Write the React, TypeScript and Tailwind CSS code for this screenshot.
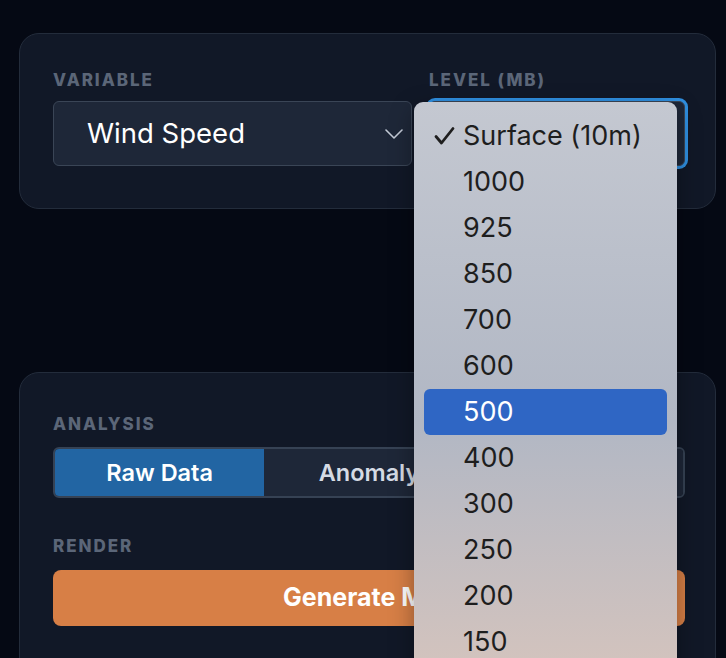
import React from 'react';

const LEVELS = ['Surface (10m)', '1000', '925', '850', '700', '600', '500', '400', '300', '250', '200', '150', '100'];

const FieldLabel: React.FC<{ children: React.ReactNode }> = ({ children }) => (
  <div className="text-[17px] leading-5 font-extrabold tracking-[0.115em] uppercase text-[#5b6678]">{children}</div>
);

const Chevron = () => (
  <svg width="18" height="10" viewBox="0 0 18 10" fill="none" stroke="#c3cad6" strokeWidth="1.6" strokeLinecap="round" strokeLinejoin="round">
    <polyline points="1,1 9,9 17,1" />
  </svg>
);

const Check = () => (
  <svg width="21" height="20" viewBox="0 0 21 20" fill="none" stroke="#1e1e1e" strokeWidth="2.8" strokeLinecap="round" strokeLinejoin="round">
    <polyline points="2,10.5 7.5,17 19,2.5" />
  </svg>
);

// Native-looking popup list shown while the level select is open
const LevelMenu: React.FC<{ selected: string; hovered: string }> = ({ selected, hovered }) => (
  <div className="absolute left-[414px] top-[102px] w-[263px] h-[580px] rounded-[9px] pt-[11px] px-[10px] bg-gradient-to-b from-[#c4c8d1] via-[#b1b7c4] via-55% to-[#d5c4bd] shadow-[0_8px_24px_rgba(0,0,0,0.35)]">
    {LEVELS.map(level => {
      const active = level === hovered;
      return (
        <div
          key={level}
          className={`relative h-[46px] flex items-center pl-[39px] rounded-[6px] text-[27px] ${
            active ? 'bg-[#2f66c4] text-white' : 'text-[#1e1e1e]'
          }`}
        >
          {level === selected && (
            <span className="absolute left-[10px] top-[13px]">
              <Check />
            </span>
          )}
          {level}
        </div>
      );
    })}
  </div>
);

const App: React.FC = () => {
  return (
    <div className="relative w-[726px] h-[658px] overflow-hidden bg-[#050914] font-['Inter',sans-serif]">
      <div className="pl-[19px] pr-[10px] pt-[33px]">
        {/* Data selection */}
        <div className="h-[176px] rounded-[20px] border border-[#232c3b] bg-[#111827] pl-[33px] pr-[30px] pt-[36px]">
          <div className="grid grid-cols-[359px_256px] gap-x-[17px]">
            <div>
              <FieldLabel>Variable</FieldLabel>
              <div className="mt-[11px] h-[65px] rounded-[6px] border border-[#3a4556] bg-[#1e2738] flex items-center justify-between pl-[33px] pr-[8px]">
                <span className="text-[27.5px] text-white">Wind Speed</span>
                <Chevron />
              </div>
            </div>
            <div>
              <FieldLabel>Level (mb)</FieldLabel>
              <div className="mt-[11px] h-[65px] rounded-[6px] border border-[#3a4556] bg-[#1e2738] ring-[3px] ring-[#2f8fe0]" />
            </div>
          </div>
        </div>

        {/* Analysis + render */}
        <div className="mt-[163px] h-[320px] rounded-[20px] border border-[#232c3b] bg-[#111827] pl-[33px] pr-[30px] pt-[41px]">
          <FieldLabel>Analysis</FieldLabel>
          <div className="mt-[13px] h-[51px] grid grid-cols-3 rounded-[6px] border-2 border-[#364254] overflow-hidden">
            <div className="bg-[#2265a3] flex items-center justify-center text-[23.5px] font-semibold text-white">Raw Data</div>
            <div className="bg-[#1e2738] flex items-center justify-center text-[23.5px] font-semibold text-[#d5dbe4]">Anomaly</div>
            <div className="bg-[#1e2738] border-l border-[#364254] flex items-center justify-center text-[23.5px] font-semibold text-[#d5dbe4]">Climatology</div>
          </div>

          <div className="mt-[38px]">
            <FieldLabel>Render</FieldLabel>
          </div>
          <button className="mt-[14px] w-full h-[56px] rounded-[8px] bg-[#d77f46] text-[25px] font-bold text-white">
            Generate Map
          </button>
        </div>
      </div>

      <LevelMenu selected="Surface (10m)" hovered="500" />
    </div>
  );
};

export default App;
